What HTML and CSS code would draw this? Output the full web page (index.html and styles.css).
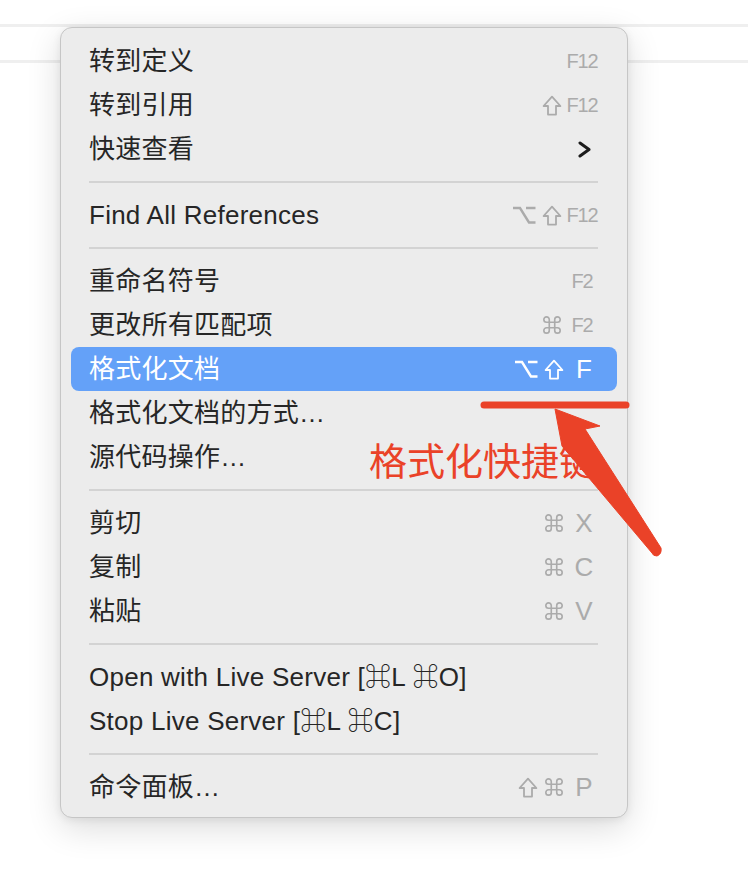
FILE: index.html
```html
<!DOCTYPE html>
<html lang="zh-CN">
<head>
<meta charset="utf-8">
<title>Context menu</title>
<link rel="stylesheet" href="styles.css">
</head>
<body>
<svg class="defs" width="0" height="0" aria-hidden="true">
  <symbol id="i-shift" viewBox="0 0 20 21">
    <path d="M10 1.6 L18.4 11 H14 V19.6 H6 V11 H1.6 Z" fill="none" stroke="currentColor" stroke-width="1.8" stroke-linejoin="round"/>
  </symbol>
  <symbol id="i-opt" viewBox="0 0 24 18">
    <path d="M1 2 H8 L17 16.5 H23.5 M14 2 H23.5" fill="none" stroke="currentColor" stroke-width="2.4"/>
  </symbol>
  <symbol id="i-cmd" viewBox="-1 -1 22 22">
    <path d="M7 7 V4 A3 3 0 1 0 4 7 H16 A3 3 0 1 0 13 4 V16 A3 3 0 1 0 16 13 H4 A3 3 0 1 0 7 16 Z" fill="none" stroke="currentColor" stroke-width="1.8"/>
  </symbol>
</svg>

<div class="bg">
  <div class="bg-line"></div>
  <div class="bg-line second"></div>
</div>

<div class="menu">
  <div class="item"><span class="label">转到定义</span><span class="sc"><span class="key fk">F12</span></span></div>
  <div class="item"><span class="label">转到引用</span><span class="sc"><svg class="mod shift"><use href="#i-shift"/></svg><span class="key fk">F12</span></span></div>
  <div class="item"><span class="label">快速查看</span><span class="sc"><span class="key"><svg class="chev" viewBox="0 0 13 17"><path d="M2 2 L11 8.5 L2 15" fill="none" stroke="currentColor" stroke-width="3" stroke-linecap="round" stroke-linejoin="round"/></svg></span></span></div>
  <div class="sep"></div>
  <div class="item"><span class="label">Find All References</span><span class="sc"><svg class="mod opt"><use href="#i-opt"/></svg><svg class="mod shift"><use href="#i-shift"/></svg><span class="key fk">F12</span></span></div>
  <div class="sep"></div>
  <div class="item"><span class="label">重命名符号</span><span class="sc"><span class="key fk">F2</span></span></div>
  <div class="item"><span class="label">更改所有匹配项</span><span class="sc"><svg class="mod cmd"><use href="#i-cmd"/></svg><span class="key fk">F2</span></span></div>
  <div class="item active"><span class="label">格式化文档</span><span class="sc"><svg class="mod opt"><use href="#i-opt"/></svg><svg class="mod shift"><use href="#i-shift"/></svg><span class="key">F</span></span></div>
  <div class="item"><span class="label">格式化文档的方式…</span></div>
  <div class="item"><span class="label">源代码操作…</span></div>
  <div class="sep"></div>
  <div class="item"><span class="label">剪切</span><span class="sc"><svg class="mod cmd"><use href="#i-cmd"/></svg><span class="key">X</span></span></div>
  <div class="item"><span class="label">复制</span><span class="sc"><svg class="mod cmd"><use href="#i-cmd"/></svg><span class="key">C</span></span></div>
  <div class="item"><span class="label">粘贴</span><span class="sc"><svg class="mod cmd"><use href="#i-cmd"/></svg><span class="key">V</span></span></div>
  <div class="sep"></div>
  <div class="item"><span class="label">Open with Live Server [⌘L ⌘O]</span></div>
  <div class="item"><span class="label">Stop Live Server [⌘L ⌘C]</span></div>
  <div class="sep"></div>
  <div class="item"><span class="label">命令面板…</span><span class="sc"><svg class="mod shift"><use href="#i-shift"/></svg><svg class="mod cmd"><use href="#i-cmd"/></svg><span class="key">P</span></span></div>
</div>

<div class="note">格式化快捷键</div>
<svg class="markup" viewBox="0 0 748 878" aria-hidden="true">
  <line x1="484" y1="405" x2="626" y2="405" stroke="#ea4228" stroke-width="7" stroke-linecap="round"/>
  <path d="M555 409 L600 426 L585 429 L661 548 Q662 554 657 556 Q653 556 652 553 L562 446 Z" fill="#ea4228" stroke="#ea4228" stroke-width="1" stroke-linejoin="round"/>
</svg>
</body>
</html>
```

FILE: styles.css
```css
html, body {
  margin: 0;
  padding: 0;
  background: #ffffff;
}

body {
  width: 748px;
  height: 878px;
  position: relative;
  overflow: hidden;
  font-family: "Liberation Sans", "Noto Sans CJK SC", sans-serif;
}

.defs {
  position: absolute;
  width: 0;
  height: 0;
}

.bg {
  padding-top: 24px;
  display: flex;
  flex-direction: column;
  gap: 33px;
}

.bg-line {
  height: 3px;
  background: #efefef;
}

.menu {
  position: absolute;
  left: 60px;
  top: 27px;
  width: 546px;
  padding: 11px 10px 8px;
  background: #ececec;
  border: 1px solid #c6c6c6;
  border-radius: 12px;
  box-shadow: 0 10px 34px rgba(0, 0, 0, 0.14), 0 2px 8px rgba(0, 0, 0, 0.07);
  display: flex;
  flex-direction: column;
}

.item {
  height: 44px;
  display: flex;
  align-items: center;
  justify-content: space-between;
  padding: 0 19px 0 18px;
  border-radius: 8px;
  color: #262626;
  font-size: 26px;
}

.label {
  white-space: nowrap;
  line-height: 44px;
  letter-spacing: 0.25px;
}

.item.active {
  background: #64a1f8;
  color: #ffffff;
}

.sc {
  display: flex;
  align-items: center;
  gap: 6px;
  color: #ababab;
}

.item.active .sc {
  color: #ffffff;
}

.mod {
  display: block;
  flex: none;
}

.mod.shift {
  width: 20px;
  height: 21px;
}

.mod.opt {
  width: 24px;
  height: 18px;
}

.mod.cmd {
  width: 20px;
  height: 20px;
}

.key {
  width: 28px;
  text-align: center;
  font-size: 26px;
  line-height: 30px;
  white-space: nowrap;
  display: flex;
  justify-content: center;
}

.key.fk {
  font-size: 20px;
  letter-spacing: -1.2px;
  padding-right: 2px;
}

.chev {
  width: 13px;
  height: 17px;
  color: #1c1c1c;
}

.sep {
  height: 2px;
  margin: 10px 19px 10px 18px;
  background: #d3d3d3;
}

.note {
  position: absolute;
  left: 369px;
  top: 439px;
  font-family: "Noto Sans CJK SC", sans-serif;
  font-size: 38px;
  line-height: 40px;
  color: #ea4228;
  white-space: nowrap;
}

.markup {
  position: absolute;
  left: 0;
  top: 0;
  width: 748px;
  height: 878px;
  pointer-events: none;
}
```
